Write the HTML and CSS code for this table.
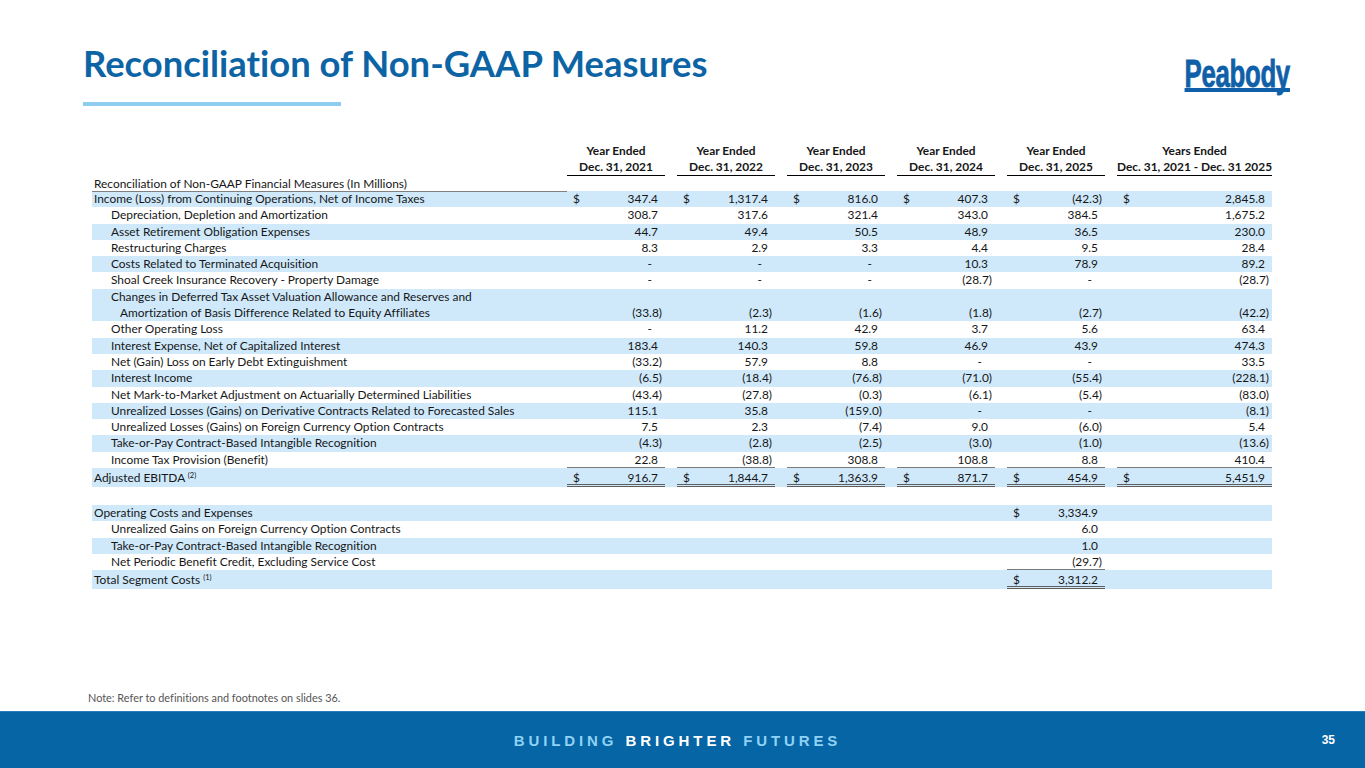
FILE: index.html
```html
<!DOCTYPE html>
<html lang="en">
<head>
<meta charset="utf-8">
<title>Reconciliation of Non-GAAP Measures</title>
<link rel="stylesheet" href="styles.css">
</head>
<body>
<div class="slide">
  <header class="top">
    <div class="title-block">
      <h1 class="title">Reconciliation of Non-GAAP Measures</h1>
      <div class="title-bar"></div>
    </div>
    <div class="logo"><span class="logo-text">Peabody</span></div>
  </header>

  <section class="tbl">
    <div class="r hd">
      <div></div>
      <div class="h">Year Ended</div>
      <div class="h">Year Ended</div>
      <div class="h">Year Ended</div>
      <div class="h">Year Ended</div>
      <div class="h">Year Ended</div>
      <div class="h">Years Ended</div>
    </div>
    <div class="r hd hd2">
      <div></div>
      <div class="h">Dec. 31, 2021</div>
      <div class="h">Dec. 31, 2022</div>
      <div class="h">Dec. 31, 2023</div>
      <div class="h">Dec. 31, 2024</div>
      <div class="h">Dec. 31, 2025</div>
      <div class="h">Dec. 31, 2021 - Dec. 31 2025</div>
    </div>
    <div class="r cap">
      <div class="l capl">Reconciliation of Non-GAAP Financial Measures (In Millions)</div>
    </div>

    <div class="r b">
      <div class="l">Income (Loss) from Continuing Operations, Net of Income Taxes</div>
      <div class="c"><span class="d">$</span><span class="p">347.4</span></div>
      <div class="c"><span class="d">$</span><span class="p">1,317.4</span></div>
      <div class="c"><span class="d">$</span><span class="p">816.0</span></div>
      <div class="c"><span class="d">$</span><span class="p">407.3</span></div>
      <div class="c"><span class="d">$</span><span>(42.3)</span></div>
      <div class="c"><span class="d">$</span><span class="p">2,845.8</span></div>
    </div>
    <div class="r">
      <div class="l in">Depreciation, Depletion and Amortization</div>
      <div class="c"><span class="p">308.7</span></div>
      <div class="c"><span class="p">317.6</span></div>
      <div class="c"><span class="p">321.4</span></div>
      <div class="c"><span class="p">343.0</span></div>
      <div class="c"><span class="p">384.5</span></div>
      <div class="c"><span class="p">1,675.2</span></div>
    </div>
    <div class="r b">
      <div class="l in">Asset Retirement Obligation Expenses</div>
      <div class="c"><span class="p">44.7</span></div>
      <div class="c"><span class="p">49.4</span></div>
      <div class="c"><span class="p">50.5</span></div>
      <div class="c"><span class="p">48.9</span></div>
      <div class="c"><span class="p">36.5</span></div>
      <div class="c"><span class="p">230.0</span></div>
    </div>
    <div class="r">
      <div class="l in">Restructuring Charges</div>
      <div class="c"><span class="p">8.3</span></div>
      <div class="c"><span class="p">2.9</span></div>
      <div class="c"><span class="p">3.3</span></div>
      <div class="c"><span class="p">4.4</span></div>
      <div class="c"><span class="p">9.5</span></div>
      <div class="c"><span class="p">28.4</span></div>
    </div>
    <div class="r b">
      <div class="l in">Costs Related to Terminated Acquisition</div>
      <div class="c"><span class="z">-</span></div>
      <div class="c"><span class="z">-</span></div>
      <div class="c"><span class="z">-</span></div>
      <div class="c"><span class="p">10.3</span></div>
      <div class="c"><span class="p">78.9</span></div>
      <div class="c"><span class="p">89.2</span></div>
    </div>
    <div class="r">
      <div class="l in">Shoal Creek Insurance Recovery - Property Damage</div>
      <div class="c"><span class="z">-</span></div>
      <div class="c"><span class="z">-</span></div>
      <div class="c"><span class="z">-</span></div>
      <div class="c"><span>(28.7)</span></div>
      <div class="c"><span class="z">-</span></div>
      <div class="c"><span>(28.7)</span></div>
    </div>
    <div class="r b two">
      <div class="l in">Changes in Deferred Tax Asset Valuation Allowance and Reserves and<br><span class="in2">Amortization of Basis Difference Related to Equity Affiliates</span></div>
      <div class="c"><span>(33.8)</span></div>
      <div class="c"><span>(2.3)</span></div>
      <div class="c"><span>(1.6)</span></div>
      <div class="c"><span>(1.8)</span></div>
      <div class="c"><span>(2.7)</span></div>
      <div class="c"><span>(42.2)</span></div>
    </div>
    <div class="r">
      <div class="l in">Other Operating Loss</div>
      <div class="c"><span class="z">-</span></div>
      <div class="c"><span class="p">11.2</span></div>
      <div class="c"><span class="p">42.9</span></div>
      <div class="c"><span class="p">3.7</span></div>
      <div class="c"><span class="p">5.6</span></div>
      <div class="c"><span class="p">63.4</span></div>
    </div>
    <div class="r b">
      <div class="l in">Interest Expense, Net of Capitalized Interest</div>
      <div class="c"><span class="p">183.4</span></div>
      <div class="c"><span class="p">140.3</span></div>
      <div class="c"><span class="p">59.8</span></div>
      <div class="c"><span class="p">46.9</span></div>
      <div class="c"><span class="p">43.9</span></div>
      <div class="c"><span class="p">474.3</span></div>
    </div>
    <div class="r">
      <div class="l in">Net (Gain) Loss on Early Debt Extinguishment</div>
      <div class="c"><span>(33.2)</span></div>
      <div class="c"><span class="p">57.9</span></div>
      <div class="c"><span class="p">8.8</span></div>
      <div class="c"><span class="z">-</span></div>
      <div class="c"><span class="z">-</span></div>
      <div class="c"><span class="p">33.5</span></div>
    </div>
    <div class="r b">
      <div class="l in">Interest Income</div>
      <div class="c"><span>(6.5)</span></div>
      <div class="c"><span>(18.4)</span></div>
      <div class="c"><span>(76.8)</span></div>
      <div class="c"><span>(71.0)</span></div>
      <div class="c"><span>(55.4)</span></div>
      <div class="c"><span>(228.1)</span></div>
    </div>
    <div class="r">
      <div class="l in">Net Mark-to-Market Adjustment on Actuarially Determined Liabilities</div>
      <div class="c"><span>(43.4)</span></div>
      <div class="c"><span>(27.8)</span></div>
      <div class="c"><span>(0.3)</span></div>
      <div class="c"><span>(6.1)</span></div>
      <div class="c"><span>(5.4)</span></div>
      <div class="c"><span>(83.0)</span></div>
    </div>
    <div class="r b">
      <div class="l in">Unrealized Losses (Gains) on Derivative Contracts Related to Forecasted Sales</div>
      <div class="c"><span class="p">115.1</span></div>
      <div class="c"><span class="p">35.8</span></div>
      <div class="c"><span>(159.0)</span></div>
      <div class="c"><span class="z">-</span></div>
      <div class="c"><span class="z">-</span></div>
      <div class="c"><span>(8.1)</span></div>
    </div>
    <div class="r">
      <div class="l in">Unrealized Losses (Gains) on Foreign Currency Option Contracts</div>
      <div class="c"><span class="p">7.5</span></div>
      <div class="c"><span class="p">2.3</span></div>
      <div class="c"><span>(7.4)</span></div>
      <div class="c"><span class="p">9.0</span></div>
      <div class="c"><span>(6.0)</span></div>
      <div class="c"><span class="p">5.4</span></div>
    </div>
    <div class="r b">
      <div class="l in">Take-or-Pay Contract-Based Intangible Recognition</div>
      <div class="c"><span>(4.3)</span></div>
      <div class="c"><span>(2.8)</span></div>
      <div class="c"><span>(2.5)</span></div>
      <div class="c"><span>(3.0)</span></div>
      <div class="c"><span>(1.0)</span></div>
      <div class="c"><span>(13.6)</span></div>
    </div>
    <div class="r">
      <div class="l in">Income Tax Provision (Benefit)</div>
      <div class="c u"><span class="p">22.8</span></div>
      <div class="c u"><span>(38.8)</span></div>
      <div class="c u"><span class="p">308.8</span></div>
      <div class="c u"><span class="p">108.8</span></div>
      <div class="c u"><span class="p">8.8</span></div>
      <div class="c u"><span class="p">410.4</span></div>
    </div>
    <div class="r b tot">
      <div class="l">Adjusted EBITDA <sup>(2)</sup></div>
      <div class="c dbl"><span class="d">$</span><span class="p">916.7</span></div>
      <div class="c dbl"><span class="d">$</span><span class="p">1,844.7</span></div>
      <div class="c dbl"><span class="d">$</span><span class="p">1,363.9</span></div>
      <div class="c dbl"><span class="d">$</span><span class="p">871.7</span></div>
      <div class="c dbl"><span class="d">$</span><span class="p">454.9</span></div>
      <div class="c dbl"><span class="d">$</span><span class="p">5,451.9</span></div>
    </div>

    <div class="r b sec">
      <div class="l">Operating Costs and Expenses</div>
      <div></div><div></div><div></div><div></div>
      <div class="c"><span class="d">$</span><span class="p">3,334.9</span></div>
    </div>
    <div class="r">
      <div class="l in">Unrealized Gains on Foreign Currency Option Contracts</div>
      <div></div><div></div><div></div><div></div>
      <div class="c"><span class="p">6.0</span></div>
    </div>
    <div class="r b">
      <div class="l in">Take-or-Pay Contract-Based Intangible Recognition</div>
      <div></div><div></div><div></div><div></div>
      <div class="c"><span class="p">1.0</span></div>
    </div>
    <div class="r">
      <div class="l in">Net Periodic Benefit Credit, Excluding Service Cost</div>
      <div></div><div></div><div></div><div></div>
      <div class="c u"><span>(29.7)</span></div>
    </div>
    <div class="r b tot">
      <div class="l">Total Segment Costs <sup>(1)</sup></div>
      <div></div><div></div><div></div><div></div>
      <div class="c dbl"><span class="d">$</span><span class="p">3,312.2</span></div>
    </div>
  </section>

  <div class="spacer"></div>
  <p class="note">Note: Refer to definitions and footnotes on slides 36.</p>

  <footer class="foot">
    <div></div>
    <div class="tag"><span class="lt">BUILDING</span> <span class="wh">BRIGHTER</span> <span class="lt">FUTURES</span></div>
    <div class="pg">35</div>
  </footer>
</div>
</body>
</html>
```

FILE: styles.css
```css
* { box-sizing: border-box; margin: 0; padding: 0; }

html, body {
  width: 1365px;
  height: 768px;
  overflow: hidden;
  background: #ffffff;
}

body {
  font-family: Lato, "Open Sans", sans-serif;
  font-variant-ligatures: no-common-ligatures;
  color: #161616;
}

.slide {
  width: 1365px;
  height: 768px;
  display: flex;
  flex-direction: column;
}

/* ---------- header ---------- */
.top {
  display: flex;
  justify-content: space-between;
  align-items: flex-start;
  padding: 41px 75px 0 83px;
}

.title {
  font-family: Lato, sans-serif;
  font-size: 36.4px;
  line-height: 44px;
  font-weight: 700;
  color: #0d64a5;
}

.title-bar {
  width: 258px;
  height: 4px;
  background: #8ecdf0;
  margin-top: 17px;
}

.logo {
  margin-top: 15px;
}

.logo-text {
  position: relative;
  display: inline-block;
  font-family: "Liberation Sans", Arial, sans-serif;
  font-weight: 700;
  font-size: 38px;
  line-height: 36px;
  color: #0f5fa9;
  letter-spacing: -0.5px;
  -webkit-text-stroke: 0.8px #0f5fa9;
  transform: scaleX(0.68);
  transform-origin: right top;
}

.logo-text::after {
  content: "";
  position: absolute;
  left: 0;
  right: 0;
  top: 32px;
  height: 4px;
  background: #0f5fa9;
}

/* ---------- table ---------- */
.tbl {
  margin: 37px 0 0 92px;
  width: 1180px;
  font-size: 11.9px;
}

.r {
  display: grid;
  grid-template-columns: 463px repeat(5, 98px) 155px;
  column-gap: 12px;
  height: 16.3px;
  line-height: 16.3px;
  white-space: nowrap;
}

.b { background: #cfe9fb; }

.hd { height: 16px; line-height: 16px; font-weight: 700; }
.hd .h { text-align: center; }
.hd2 .h { border-bottom: 1px solid #000; height: 17px; }
.hd2 { height: 17px; }

.cap { height: 15px; line-height: 14px; }
.capl {
  margin-right: -12px;
  border-bottom: 1px solid #808080;
  padding-top: 1px;
}

.l { padding-left: 2px; }
.l.in { padding-left: 19px; }
.in2 { padding-left: 9px; }

.two { height: 32.6px; }
.two .c { align-self: end; }

.c {
  display: flex;
  justify-content: flex-end;
  padding: 0 3px 0 6px;
}

.d { margin-right: auto; }
.p { padding-right: 4px; }
.z { padding-right: 10px; }

.u {
  background: linear-gradient(#7a7a7a, #7a7a7a) left bottom / 100% 1px no-repeat;
}

.tot { height: 19px; }
.tot .l { line-height: 16px; padding-top: 2px; }
.tot .c { line-height: 16px; padding-top: 2px; }

.dbl {
  background:
    linear-gradient(#5e5e5e, #5e5e5e) left bottom / 100% 1px no-repeat,
    linear-gradient(#5e5e5e, #5e5e5e) left calc(100% - 2px) / 100% 1px no-repeat;
}

.sec { margin-top: 18px; }

sup {
  font-size: 7.5px;
  line-height: 0;
  vertical-align: 4px;
}

/* ---------- bottom ---------- */
.spacer { flex: 1; }

.note {
  font-family: Lato, sans-serif;
  font-size: 10.9px;
  line-height: 14px;
  color: #555555;
  padding-left: 88px;
  margin-bottom: 6px;
}

.foot {
  height: 57px;
  background: #0565a5;
  border-top: 1px solid #2a7cb9;
  display: grid;
  grid-template-columns: 1fr auto 1fr;
  align-items: center;
}

.tag {
  font-family: "Liberation Sans", Arial, sans-serif;
  font-weight: 700;
  font-size: 15px;
  letter-spacing: 3.9px;
  padding-right: 10px;
}

.lt { color: #8fd2f4; }
.wh { color: #ffffff; }

.pg {
  justify-self: end;
  padding-right: 30px;
  font-family: "Liberation Sans", Arial, sans-serif;
  font-weight: 700;
  font-size: 12px;
  color: #ffffff;
}
```
